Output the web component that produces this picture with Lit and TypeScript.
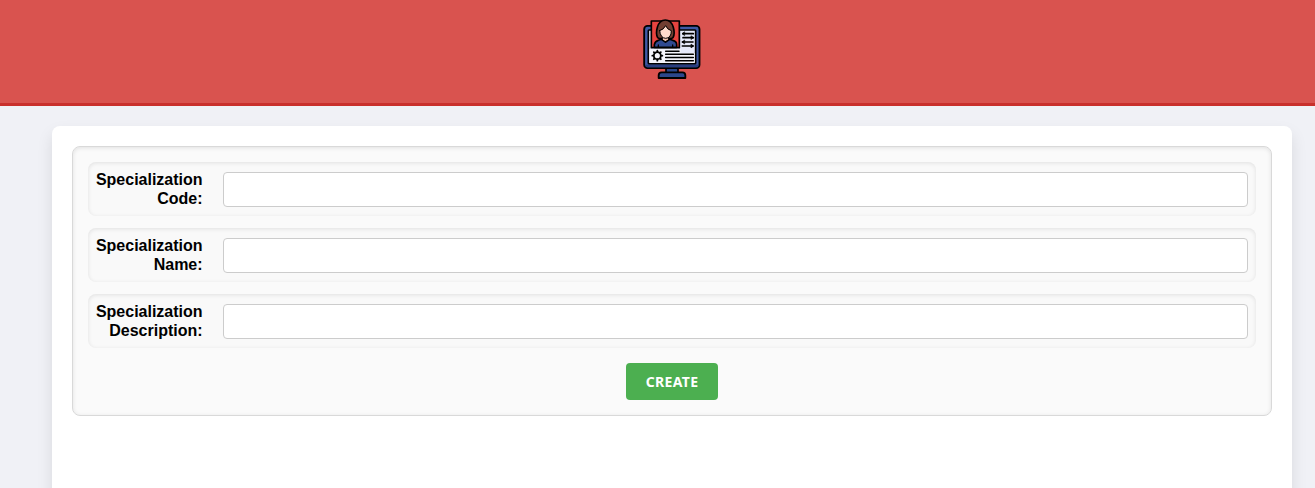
import { LitElement, html, css } from "lit";
import { customElement } from "lit/decorators.js";

@customElement("specialist-logo")
class SpecialistLogo extends LitElement {
  static styles = css`
    :host { display: block; width: 72px; height: 72px; }
    svg { display: block; }
  `;
  render() {
    return html`<svg width="72" height="72" viewBox="0 0 216 216" stroke-linecap="round" stroke-linejoin="round">
      <path d="M90 168h36v16H90z" fill="#2b478b" stroke="#000" stroke-width="5" />
      <path d="M68 198v-8q0-9 9-9h62q9 0 9 9v8z" fill="#2b478b" stroke="#000" stroke-width="5.5" />
      <rect x="24.500" y="41.500" width="166" height="127" rx="10" fill="#3f5aa5" stroke="#000" stroke-width="5.5" />
      <path d="M28 158h160q0 8-8 8H36q-8 0-8-8z" fill="#293e80" />
      <rect x="37" y="54" width="142" height="101" rx="2" fill="#e6e9fa" stroke="#000" stroke-width="5" />
      <path d="M40 112h94v11h42v30H40z" fill="#f4f4fb" />
      <rect x="46" y="27" width="84" height="80" fill="#e7433f" stroke="#000" stroke-width="5" />
      <path d="M65 77C58 65 62 24 88 24s30 41 23 53q-7 5-16 2H80q-8 3-15-2z" fill="#713f32" stroke="#000" stroke-width="5" />
      <path d="M55 106V98q2-10 12-13l12-4h19l12 4q12 3 12 13v8z" fill="#304a91" stroke="#000" stroke-width="5" />
      <path d="M79 73v9q9 13 19 0v-9z" fill="#efc2ad" stroke="#000" stroke-width="3" />
      <path d="M71 56q12-3 18-15 5 12 17 15 0 22-17 23-16-1-18-23z" fill="#ffddcd" stroke="#000" stroke-width="3" />
      <path d="M77 83l11 8 12-8M67 99v6M110 99v6" fill="none" stroke="#000" stroke-width="4" />
      <g stroke="#000" stroke-width="5" fill="#000">
        <path d="M141 65h31M139 90h32M141 77h31M139 102h32" fill="none" />
        <path d="M145 60l-7 5 7 5zM145 85l-7 5 7 5zM166 72l7 5-7 5zM166 97l7 5-7 5z" stroke-width="2" />
      </g>
      <path d="M89 118h40M89 127h83M89 136.500h83M89 146h83" fill="none" stroke="#000" stroke-width="4.500" />
      <g fill="none" stroke="#000">
        <circle cx="64" cy="131" r="10.500" stroke-width="5.500" />
        <path d="M64 116v3M64 143v3M49 131h3M76 131h3M53.500 120.500l2 2M72.500 139.500l2 2M53.500 141.500l2-2M72.500 122.500l2-2" stroke-width="5.500" />
      </g>
    </svg>`;
  }
}

@customElement("app-root")
class AppRoot extends LitElement {
  static styles = css`
    * { box-sizing: border-box; }
    :host {
      display: block;
      height: 488px;
      overflow: hidden;
      background: #f0f1f6;
      font: 16px/19px "Liberation Sans", Arial, sans-serif;
      color: #000;
    }
    .header {
      display: flex;
      justify-content: center;
      height: 106px;
      padding: 12px 0 0 29px;
      background: #d9534f;
      border-bottom: 3px solid #c9302c;
    }
    .card {
      width: 1240px;
      height: 600px;
      margin: 20px 0 0 52px;
      padding: 20px;
      background: #fff;
      border-radius: 8px;
      box-shadow: 0 8px 16px rgba(0, 0, 0, 0.1);
    }
    .form {
      display: flex;
      flex-direction: column;
      align-items: stretch;
      gap: 12px;
      height: 270px;
      padding: 15px;
      background: #fafafa;
      border: 1px solid #d9d9d9;
      border-radius: 8px;
      box-shadow: inset 0 1px 4px rgba(0, 0, 0, 0.1);
    }
    .row {
      display: flex;
      align-items: center;
      height: 54px;
      padding: 0 8px 0 5px;
      background: #f9f9f9;
      border-radius: 8px;
      box-shadow: inset 0 1px 4px rgba(0, 0, 0, 0.1);
    }
    .label {
      width: 109.600px;
      margin-right: 20.400px;
      text-align: right;
      font-weight: bold;
    }
    .input {
      flex: 1;
      min-width: 0;
      height: 35px;
      padding: 8px;
      background: #fff;
      border: 1px solid #ccc;
      border-radius: 4px;
      outline: none;
    }
    .create {
      align-self: center;
      width: 92px;
      height: 37px;
      margin-top: 3px;
      padding: 0;
      border: 0;
      border-radius: 4px;
      background: #4caf50;
      color: #fff;
      font: bold 14px "Noto Sans", sans-serif;
      letter-spacing: 0.35px;
    }
  `;
  render() {
    return html`
      <header class="header"><specialist-logo></specialist-logo></header>
      <main class="card">
        <form class="form">
          ${["Code", "Name", "Description"].map(
            (name) => html`<div class="row">
              <label class="label" for=${name}>Specialization ${name}:</label>
              <input class="input" id=${name} type="text" />
            </div>`
          )}
          <button class="create" type="button">CREATE</button>
        </form>
      </main>
    `;
  }
}
